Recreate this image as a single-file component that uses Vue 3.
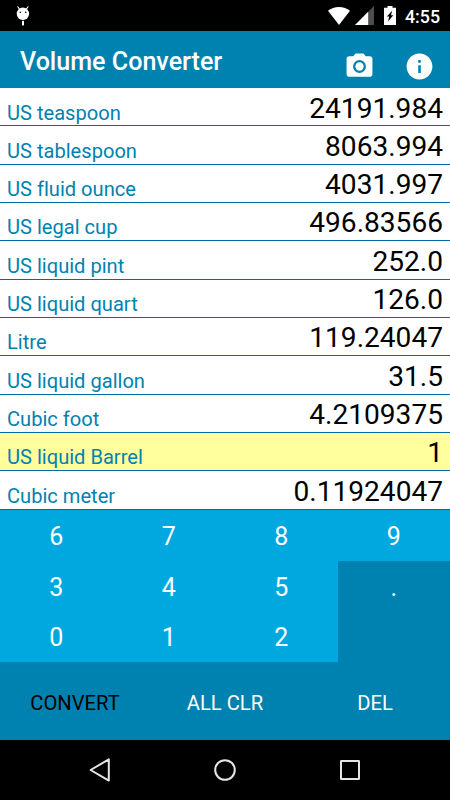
<template>
  <div class="screen">

    <div class="status-bar">
      <svg class="status-bar__bot" viewBox="0 0 14 20">
        <path d="M1.8 0.8L3.6 3.4M12 0.8L10.2 3.4" stroke="#fff" stroke-width="1.1" stroke-linecap="round" />
        <circle cx="6.9" cy="7.8" r="6.2" fill="#fff" />
        <rect x="6" y="14.8" width="2" height="4.6" fill="#fff" />
        <circle cx="4.3" cy="6.2" r="0.8" fill="#000" />
        <circle cx="9.7" cy="6.2" r="0.8" fill="#000" />
      </svg>

      <div class="status-bar__system">
        <svg class="status-bar__wifi" viewBox="0 0 22 18">
          <path d="M11 18L0 3.8C3 1.4 6.8 0 11 0s8 1.4 11 3.8z" fill="#fff" />
        </svg>

        <svg class="status-bar__signal" viewBox="0 0 19 19">
          <path d="M19 0V19H0z" fill="#4d4d4d" />
          <path d="M13.2 5.8V19H0z" fill="#fff" />
        </svg>

        <svg class="status-bar__battery" viewBox="0 0 12 19">
          <path d="M3.5 0h5v1.8H12V19H0V1.8h3.5z" fill="#fff" />
          <path d="M8.2 4.8L2.8 10.6H5.2L4 15.6L9.3 9.2H7z" fill="#000" />
        </svg>

        <span class="status-bar__time">4:55</span>
      </div>
    </div>

    <header class="app-bar">
      <h1 class="app-bar__title">Volume Converter</h1>

      <div class="app-bar__actions">
        <button class="app-bar__button" aria-label="Camera">
          <svg viewBox="0 0 24 24" fill="#fff">
            <path fill-rule="evenodd" d="M9 2L7.17 4H4c-1.1 0-2 .9-2 2v12c0 1.1.9 2 2 2h16c1.1 0 2-.9 2-2V6c0-1.1-.9-2-2-2h-3.17L15 2H9zm3 15a5 5 0 1 1 0-10 5 5 0 0 1 0 10z" />
            <circle cx="12" cy="12" r="3.2" />
          </svg>
        </button>

        <button class="app-bar__button" aria-label="Info">
          <svg viewBox="0 0 24 24" fill="#fff">
            <path d="M12 2C6.48 2 2 6.48 2 12s4.48 10 10 10 10-4.48 10-10S17.52 2 12 2zm1 15h-2v-6h2v6zm0-8h-2V7h2v2z" />
          </svg>
        </button>
      </div>
    </header>

    <div class="units">
      <div
        v-for="unit in units"
        :key="unit.name"
        class="unit-row"
        :class="{ active: unit.name === activeUnit }"
        @click="activeUnit = unit.name"
      >
        <span class="unit-row__name">{{ unit.name }}</span>
        <span class="unit-row__value">{{ unit.value }}</span>
      </div>
    </div>

    <div class="keypad">
      <button
        v-for="(key, index) in keys"
        :key="index"
        class="keypad__key"
        :class="{ dark: key === '.' || key === '' }"
        @click="press(key)"
      >
        {{ key }}
      </button>
    </div>

    <div class="actions">
      <button class="actions__button convert">CONVERT</button>
      <button class="actions__button" @click="clearAll">ALL CLR</button>
      <button class="actions__button" @click="removeLast">DEL</button>
    </div>

    <nav class="nav-bar">
      <svg class="nav-bar__icon" viewBox="0 0 24 24">
        <path d="M20.8 1.4V22.6L2.6 12z" />
      </svg>
      <svg class="nav-bar__icon" viewBox="0 0 24 24">
        <circle cx="12" cy="12" r="9.8" />
      </svg>
      <svg class="nav-bar__icon" viewBox="0 0 24 24">
        <rect x="3" y="3" width="18" height="18" rx="0.3" />
      </svg>
    </nav>

  </div>
</template>

<script setup>
import { ref } from 'vue'

const activeUnit = ref('US liquid Barrel')

const units = ref([
  { name: 'US teaspoon', value: '24191.984' },
  { name: 'US tablespoon', value: '8063.994' },
  { name: 'US fluid ounce', value: '4031.997' },
  { name: 'US legal cup', value: '496.83566' },
  { name: 'US liquid pint', value: '252.0' },
  { name: 'US liquid quart', value: '126.0' },
  { name: 'Litre', value: '119.24047' },
  { name: 'US liquid gallon', value: '31.5' },
  { name: 'Cubic foot', value: '4.2109375' },
  { name: 'US liquid Barrel', value: '1' },
  { name: 'Cubic meter', value: '0.11924047' }
])

const keys = ['6', '7', '8', '9', '3', '4', '5', '.', '0', '1', '2', '']

const current = () => units.value.find((unit) => unit.name === activeUnit.value)

const press = (key) => {
  current().value += key
}

const removeLast = () => {
  current().value = current().value.slice(0, -1)
}

const clearAll = () => {
  units.value.forEach((unit) => {
    unit.value = ''
  })
}
</script>

<style>
body {
  margin: 0;
  background: #000;
}
</style>

<style scoped>
.screen {
  display: flex;
  flex-direction: column;
  width: 450px;
  height: 800px;
  overflow: hidden;
  background: #fff;
  font-family: Roboto, 'Liberation Sans', sans-serif;
}

button {
  padding: 0;
  border: none;
  background: none;
  color: inherit;
  font-family: inherit;
  cursor: pointer;
}

svg {
  display: block;
}

.status-bar {
  display: flex;
  justify-content: space-between;
  align-items: center;
  box-sizing: border-box;
  height: 31px;
  padding: 0 10px 0 15.5px;
  background: #000;
}

.status-bar__bot {
  width: 14px;
  height: 20px;
}

.status-bar__system {
  display: flex;
  align-items: center;
}

.status-bar__wifi {
  width: 22px;
  height: 18px;
  margin-right: 5px;
}

.status-bar__signal {
  width: 19px;
  height: 19px;
  margin-right: 10px;
}

.status-bar__battery {
  width: 12px;
  height: 19px;
  margin-right: 9px;
}

.status-bar__time {
  color: #fff;
  font-size: 17.8px;
  font-weight: 500;
  line-height: 20px;
  padding-top: 2px;
}

.app-bar {
  display: flex;
  justify-content: space-between;
  box-sizing: border-box;
  height: 57px;
  padding: 0 15px 0 20px;
  background: #0082b0;
}

.app-bar__title {
  margin: 0;
  color: #fff;
  font-size: 25.1px;
  font-weight: 500;
  line-height: 61px;
}

.app-bar__actions {
  display: flex;
  gap: 29px;
  padding-top: 20px;
}

.app-bar__button,
.app-bar__button svg {
  width: 31px;
  height: 31px;
}

.units {
  display: grid;
  grid-template-rows: repeat(11, minmax(0, 1fr));
  height: 421.67px;
}

.unit-row {
  display: flex;
  justify-content: space-between;
  align-items: baseline;
  box-sizing: border-box;
  padding: 2.5px 7px 0;
  border-bottom: 1px solid #0069a8;
  background: #fff;
}

.unit-row.active {
  background: #ffff9e;
}

.unit-row__name {
  padding-top: 2px;
  color: #0082b0;
  font-size: 20.1px;
  font-variant-ligatures: none;
  line-height: 36px;
  transform: translateY(2px);
}

.unit-row__value {
  color: #000;
  font-size: 28.1px;
  line-height: 35px;
}

.keypad {
  display: grid;
  grid-template-columns: repeat(4, 1fr);
  grid-template-rows: repeat(3, 1fr);
  height: 152.8px;
  background: #00a8e0;
}

.keypad__key {
  padding-top: 2px;
  color: #fff;
  font-size: 25px;
}

.keypad__key.dark {
  background: #0082b0;
}

.actions {
  display: grid;
  flex: 1;
  grid-template-columns: repeat(3, 1fr);
  background: #0082b0;
}

.actions__button {
  padding-top: 3px;
  color: #fff;
  font-size: 20.2px;
}

.actions__button.convert {
  color: #000;
}

.nav-bar {
  display: flex;
  justify-content: center;
  align-items: center;
  gap: 101px;
  height: 60px;
  background: #000;
}

.nav-bar__icon {
  width: 24px;
  height: 24px;
  fill: none;
  stroke: #e6e6e6;
  stroke-width: 2;
  stroke-linejoin: round;
}
</style>
